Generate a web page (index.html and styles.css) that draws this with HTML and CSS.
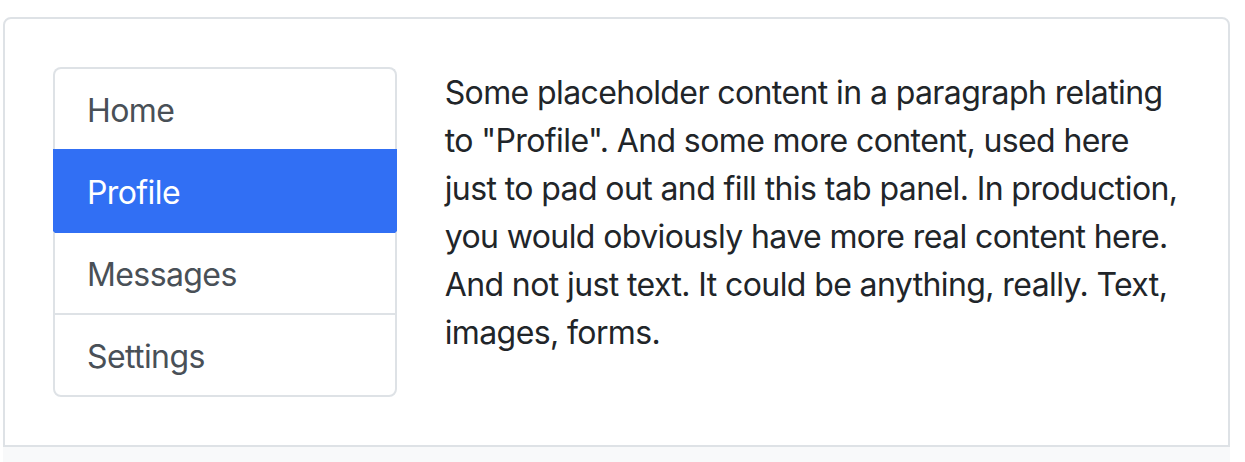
FILE: index.html
```html
<!DOCTYPE html>
<html lang="en">
<head>
<meta charset="utf-8">
<title>List group tabs</title>
<link rel="stylesheet" href="styles.css">
</head>
<body>
<div class="example">
  <div class="row">
    <div class="col-side">
      <div class="list-group">
        <a class="list-item" href="#home">Home</a>
        <a class="list-item active" href="#profile">Profile</a>
        <a class="list-item" href="#messages">Messages</a>
        <a class="list-item" href="#settings">Settings</a>
      </div>
    </div>
    <div class="col-main">
      <p class="panel-text">Some placeholder content in a paragraph relating to "Profile". And some more content, used here just to pad out and fill this tab panel. In production, you would obviously have more real content here. And not just text. It could be anything, really. Text, images, forms.</p>
    </div>
  </div>
</div>
<div class="highlight"></div>
</body>
</html>
```

FILE: styles.css
```css
* { box-sizing: border-box; }
html, body { margin: 0; padding: 0; background: #fff; }
body {
  font-family: Inter, "Noto Sans", "Liberation Sans", sans-serif;
  font-size: 32px;
  line-height: 48px;
  letter-spacing: -0.6px;
  color: #212529;
  padding: 17px 15px 0 3px;
}
.example {
  border: 2px solid #dee2e6;
  border-radius: 8px 8px 0 0;
  padding: 48px;
  width: 1227px;
}
.row {
  display: flex;
  margin: 0 -24px;
}
.col-side {
  flex: 0 0 33.3333%;
  padding: 0 24px;
}
.col-main {
  flex: 0 0 66.6667%;
  padding: 0 24px;
}
.list-group {
  display: flex;
  flex-direction: column;
}
.list-item {
  display: block;
  padding: 18px 32px 14px;
  color: #495057;
  text-decoration: none;
  border: 2px solid #dee2e6;
  border-bottom: 0;
}
.list-item:first-child { border-radius: 8px 8px 0 0; }
.list-item:last-child {
  border-bottom: 2px solid #dee2e6;
  border-radius: 0 0 8px 8px;
}
.list-item.active {
  background: #316ff4;
  color: #fff;
  border-color: #316ff4;
}
.list-item.active + .list-item { border-top-color: #316ff4; }
.panel-text {
  margin: 0;
  padding-top: 2px;
}
.highlight {
  width: 1227px;
  height: 20px;
  background: #f8f9fa;
}
```
